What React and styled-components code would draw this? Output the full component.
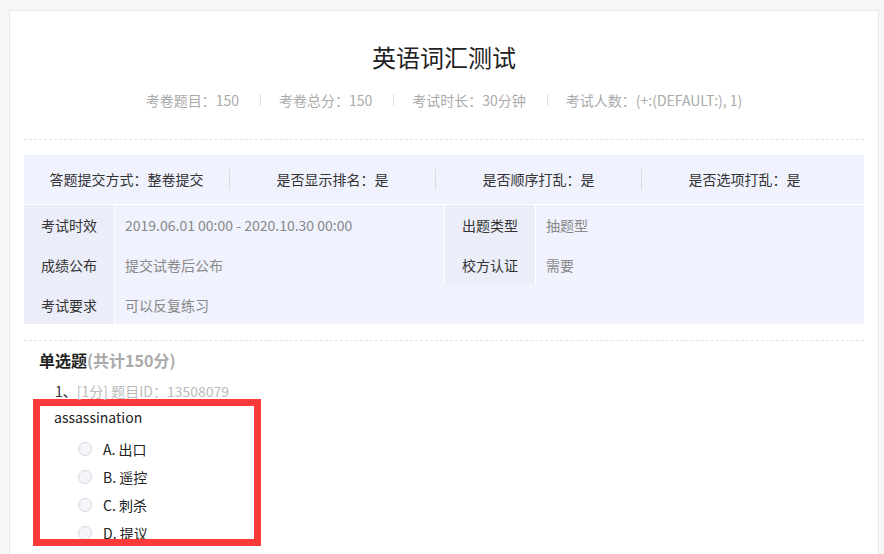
import React from 'react';
import styled, { createGlobalStyle } from 'styled-components';

const GlobalStyle = createGlobalStyle`
  html, body {
    margin: 0;
    padding: 0;
    background: #f6f6f6;
    font-family: "Microsoft YaHei", "Noto Sans CJK SC", sans-serif;
    color: #333;
    overflow: hidden;
  }
`;

const Page = styled.div`
  padding: 10px 6px 0 9px;
  height: 554px;
  box-sizing: border-box;
`;

const Card = styled.div`
  width: 870px;
  min-height: 600px;
  box-sizing: border-box;
  background: #fff;
  border: 1px solid #e8e8e8;
  padding: 0 14px;
`;

const Header = styled.div`
  padding: 30px 0 29px;
  border-bottom: 1px dashed #e3e3e3;
  text-align: center;
`;

const Title = styled.h1`
  margin: 0;
  font-size: 24px;
  line-height: 32px;
  font-weight: normal;
  color: #222;
`;

const Meta = styled.div`
  margin-top: 17px;
  display: flex;
  justify-content: center;
  align-items: center;
  font-size: 14px;
  line-height: 20px;
  color: #aaa;
`;

const Sep = styled.span`
  width: 1px;
  height: 12px;
  background: #ddd;
  margin: 0 18px 0 21px;
`;

const InfoTable = styled.div`
  margin-top: 15px;
  background: #f0f2fd;
`;

const TopRow = styled.div`
  display: flex;
  align-items: center;
  height: 49px;
  border-bottom: 1px solid #fff;
`;

const TopCell = styled.div`
  flex: 0 0 205px;
  text-align: center;
  font-size: 14px;
  line-height: 21px;
  color: #333;
  border-left: ${p => (p.$divider ? '1px solid #dcdcdc' : 'none')};
`;

const Row = styled.div`
  display: grid;
  grid-template-columns: 90px 329px 90px 1fr;
  column-gap: 1px;
  height: 39px;
  background: #fff;
  & + & {
    margin-top: 1px;
  }
`;

const Label = styled.div`
  display: flex;
  align-items: center;
  justify-content: center;
  background: #ebeef8;
  font-size: 14px;
  color: #333;
`;

const Value = styled.div`
  display: flex;
  align-items: center;
  padding-left: 10px;
  background: #f0f2fd;
  font-size: 14px;
  color: #888;
  grid-column: ${p => (p.$wide ? '2 / 5' : 'auto')};
`;

const Section = styled.div`
  margin-top: 16px;
  border-top: 1px dashed #e3e3e3;
  padding: 7px 0 0 15px;
`;

const SectionTitle = styled.div`
  font-size: 16px;
  line-height: 24px;
  font-weight: bold;
  color: #222;
  & > span {
    color: #aaa;
  }
`;

const QuestionMeta = styled.div`
  margin: 10px 0 0 16px;
  font-size: 14px;
  line-height: 18px;
  color: #bbb;
  & > b {
    font-weight: normal;
    color: #333;
  }
`;

const QuestionBox = styled.div`
  margin: -1px 0 0 -6px;
  width: 228px;
  height: 147px;
  box-sizing: border-box;
  border: 7px solid #fd3a3a;
  overflow: hidden;
  padding: 1px 0 0 14px;
`;

const Stem = styled.div`
  font-size: 14px;
  line-height: 20px;
  color: #222;
`;

const Options = styled.div`
  margin-top: 8px;
  padding-left: 24px;
`;

const Option = styled.label`
  display: flex;
  align-items: center;
  height: 28px;
  font-size: 14px;
  color: #222;
`;

const Radio = styled.span`
  width: 14px;
  height: 14px;
  box-sizing: border-box;
  border-radius: 50%;
  border: 1px solid #d6d8e2;
  background: #f5f6fa;
  margin-right: 11px;
`;

const topItems = [
  '答题提交方式：整卷提交',
  '是否显示排名：是',
  '是否顺序打乱：是',
  '是否选项打乱：是',
];

const metaItems = ['考卷题目：150', '考卷总分：150', '考试时长：30分钟', '考试人数：(+:(DEFAULT:), 1)'];

const options = ['A. 出口', 'B. 遥控', 'C. 刺杀', 'D. 提议'];

export default function App() {
  return (
    <>
      <GlobalStyle />
      <Page>
        <Card>
          <Header>
            <Title>英语词汇测试</Title>
            <Meta>
              {metaItems.map((m, i) => (
                <React.Fragment key={m}>
                  {i > 0 && <Sep />}
                  <span>{m}</span>
                </React.Fragment>
              ))}
            </Meta>
          </Header>

          <InfoTable>
            <TopRow>
              {topItems.map((t, i) => (
                <TopCell key={t} $divider={i > 0}>{t}</TopCell>
              ))}
            </TopRow>
            <Row>
              <Label>考试时效</Label>
              <Value>2019.06.01 00:00 - 2020.10.30 00:00</Value>
              <Label>出题类型</Label>
              <Value>抽题型</Value>
            </Row>
            <Row>
              <Label>成绩公布</Label>
              <Value>提交试卷后公布</Value>
              <Label>校方认证</Label>
              <Value>需要</Value>
            </Row>
            <Row>
              <Label>考试要求</Label>
              <Value $wide>可以反复练习</Value>
            </Row>
          </InfoTable>

          <Section>
            <SectionTitle>
              单选题<span>(共计150分)</span>
            </SectionTitle>
            <QuestionMeta>
              <b>1、</b>[1分] 题目ID：13508079
            </QuestionMeta>
            <QuestionBox>
              <Stem>assassination</Stem>
              <Options>
                {options.map(o => (
                  <Option key={o}>
                    <Radio />
                    {o}
                  </Option>
                ))}
              </Options>
            </QuestionBox>
          </Section>
        </Card>
      </Page>
    </>
  );
}
